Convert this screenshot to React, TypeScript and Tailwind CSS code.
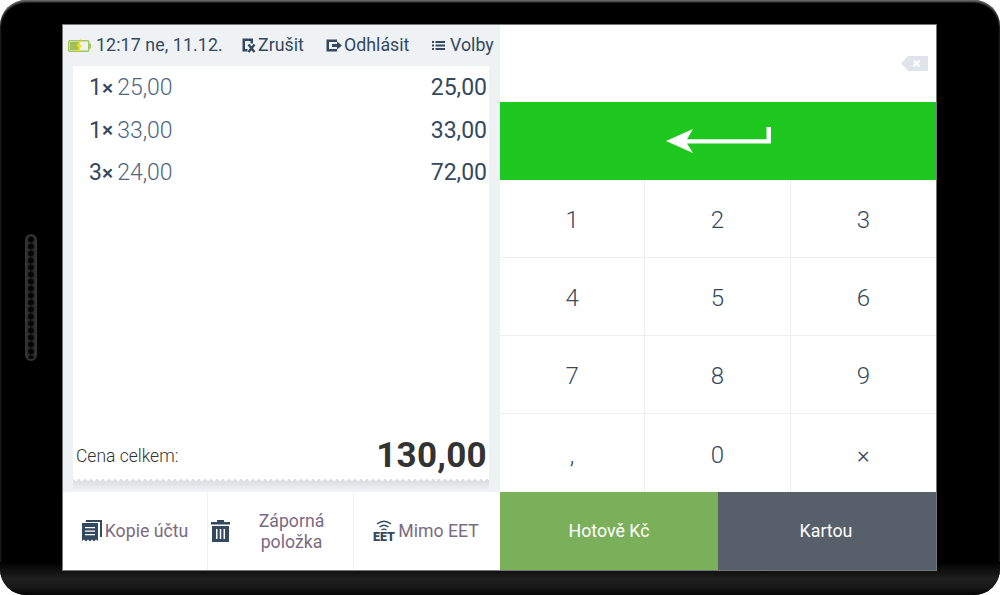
const items = [
  { qty: '1', price: '25,00', total: '25,00' },
  { qty: '1', price: '33,00', total: '33,00' },
  { qty: '3', price: '24,00', total: '72,00' },
];

const keys = ['1', '2', '3', '4', '5', '6', '7', '8', '9', ',', '0', '×'];

function BatteryIcon() {
  return (
    <svg width="23" height="14" viewBox="0 0 23 14" className="shrink-0">
      <rect x="0.75" y="1.75" width="20" height="10.5" rx="1" fill="#eef2f5" stroke="#a5c75f" strokeWidth="1.5" />
      <rect x="2" y="3" width="10" height="8" fill="#a0c058" />
      <rect x="21" y="4.5" width="2" height="5" fill="#a5c75f" />
      <path d="M12.5 0 L8.5 7.5 H10.5 L10 14 L14 6 H11.8 L13 0 Z" fill="#f3e312" />
    </svg>
  );
}

function CancelIcon() {
  return (
    <svg width="14" height="15" viewBox="0 0 14 15" className="shrink-0">
      <path d="M0.5 0.5 H11 V5.5 H8.5 V3 H3 V11 H5.5 V13.5 H0.5 Z" fill="#34495e" />
      <path d="M6.5 6.5 L12.5 14 M12.5 6.5 L6.5 14" stroke="#34495e" strokeWidth="2.4" fill="none" />
    </svg>
  );
}

function LogoutIcon() {
  return (
    <svg width="16" height="13" viewBox="0 0 16 13" className="shrink-0">
      <path d="M0.5 0.5 H11 V3 H3 V10 H11 V12.5 H0.5 Z" fill="#34495e" />
      <path d="M6 5 H11 V2.5 L16 6.5 L11 10.5 V8 H6 Z" fill="#34495e" />
    </svg>
  );
}

function ListIcon() {
  return (
    <svg width="13" height="11" viewBox="0 0 13 11" className="shrink-0">
      <path d="M0 1 H2 V3 H0 Z M0 4.5 H2 V6.5 H0 Z M0 8 H2 V10 H0 Z" fill="#34495e" />
      <path d="M3.5 1 H13 V3 H3.5 Z M3.5 4.5 H13 V6.5 H3.5 Z M3.5 8 H13 V10 H3.5 Z" fill="#34495e" />
    </svg>
  );
}

function ReceiptIcon() {
  return (
    <svg width="20" height="22" viewBox="0 0 20 22" className="shrink-0">
      <path d="M3 1.5 H4 V0 H18.5 H20 V17 H18 V2 H4 Z" fill="#34495e" />
      <path
        d="M0 3 H16 V21 L14 19.5 L12 21.5 L10 19.5 L8 21.5 L6 19.5 L4 21.5 L2 19.5 L0 21 Z"
        fill="#34495e"
      />
      <path d="M3 7 H13 V8.2 H3 Z M3 10.5 H13 V11.7 H3 Z M3 14 H13 V15.2 H3 Z" fill="#fff" />
    </svg>
  );
}

function TrashIcon() {
  return (
    <svg width="19" height="22" viewBox="0 0 19 22" className="shrink-0">
      <path d="M6 0 H13 V2 H19 V4.5 H0 V2 H6 Z" fill="#34495e" />
      <path d="M1 6 H18 V22 H1 Z" fill="#34495e" />
      <path d="M5 9 H6.5 V19 H5 Z M8.75 9 H10.25 V19 H8.75 Z M12.5 9 H14 V19 H12.5 Z" fill="#fff" />
    </svg>
  );
}

function EetIcon() {
  return (
    <svg width="24" height="24" viewBox="0 0 24 24" className="shrink-0">
      <path d="M5 5 Q12 -0.5 19 5" stroke="#34495e" strokeWidth="1.4" fill="none" />
      <path d="M7.5 8 Q12 4.5 16.5 8" stroke="#34495e" strokeWidth="1.4" fill="none" />
      <path d="M9.5 11 Q12 9.2 14.5 11" stroke="#34495e" strokeWidth="1.4" fill="none" />
      <text x="12" y="21.5" textAnchor="middle" fontFamily="Roboto" fontWeight="900" fontSize="12.5" fill="#34495e">
        EET
      </text>
    </svg>
  );
}

function BackspaceIcon() {
  return (
    <svg width="27" height="15" viewBox="0 0 27 15">
      <path d="M7 0 H27 V15 H7 L0 7.5 Z" fill="#dfe4eb" />
      <path d="M12.5 4.5 L18.5 10.5 M18.5 4.5 L12.5 10.5" stroke="#fff" strokeWidth="2.2" />
    </svg>
  );
}

function EnterIcon() {
  return (
    <svg width="106" height="28" viewBox="0 0 106 28">
      <path d="M0 14 L27 2 L21 12.2 H100.5 V0 H105 V16.5 H21 L27 26 Z" fill="#fff" />
    </svg>
  );
}

function TornEdge() {
  return (
    <svg width="416" height="5" className="block">
      <defs>
        <pattern id="torn" width="6" height="5" patternUnits="userSpaceOnUse">
          <path d="M0 0 H6 V0.5 L3 3.5 L0 0.5 Z" fill="#fff" />
        </pattern>
      </defs>
      <rect width="416" height="5" fill="url(#torn)" />
    </svg>
  );
}

export default function App() {
  return (
    <div className="w-[1000px] h-[595px] bg-white overflow-hidden font-['Roboto',sans-serif]">
      <div className="relative w-full h-full rounded-[26px] bg-black shadow-[inset_0_2px_2px_rgba(130,130,130,0.8)] overflow-hidden pt-[25px] pl-[63px]">
        {/* bottom band of the tablet */}
        <div className="absolute inset-x-0 bottom-0 h-[33px] bg-[linear-gradient(180deg,#000_0%,#1f1f1f_50%,#181818_75%,#050505_100%)]" />
        {/* speaker */}
        <div className="absolute left-[25px] top-[234px] w-[12px] h-[127px] rounded-full border-2 border-[#333] bg-[radial-gradient(circle,#050505_45%,#2c2c2c_70%)] bg-[length:8px_7px]" />

        <div className="relative flex w-[873px] h-[545px] outline outline-1 outline-[#777]">
          {/* left side */}
          <div className="flex flex-col w-[437px] bg-white">
            <div className="flex flex-col h-[467px] bg-[#eef2f5]">
              <div className="flex items-center h-[41px] pl-[5px] text-[17.8px] text-[#34495e] whitespace-nowrap">
                <BatteryIcon />
                <span className="ml-[5px] w-[146px] tracking-[0.1px]">12:17 ne, 11.12.</span>
                <span className="flex items-center gap-[2px] w-[84px]">
                  <CancelIcon />
                  Zrušit
                </span>
                <span className="flex items-center gap-[2px] w-[106px]">
                  <LogoutIcon />
                  Odhlásit
                </span>
                <span className="flex items-center gap-[5px]">
                  <ListIcon />
                  Volby
                </span>
              </div>
              <div className="flex flex-col w-[416px] ml-[10px] h-[412px] bg-white">
                <div className="flex flex-col flex-1 pt-[1.5px] pl-[16px] pr-[2px]">
                  {items.map((item) => (
                    <div key={item.total + item.qty} className="flex items-center justify-between h-[42.25px] text-[23px] text-[#34495e]">
                      <span className="flex items-center">
                        <span>{item.qty}</span>
                        <span className="text-[21px] font-medium mr-[4px] leading-none">×</span>
                        <span className="font-light text-[#4f6580]">{item.price}</span>
                      </span>
                      <span>{item.total}</span>
                    </div>
                  ))}
                </div>
                <div className="flex items-end justify-between h-[42px] pl-[3px] pr-[2px]">
                  <span className="text-[17.5px] font-light text-[#333] mb-[9px]">Cena celkem:</span>
                  <span className="text-[35px] font-bold text-[#333] leading-[42px] tracking-[0.3px] mb-[1px]">130,00</span>
                </div>
              </div>
              <div className="w-[416px] ml-[10px] h-[14px] bg-[linear-gradient(180deg,#d4d8da,#f3f5f6)]">
                <TornEdge />
              </div>
            </div>
            <div className="flex flex-1 text-[17.7px] text-[#7b6a80]">
              <div className="flex items-center justify-center gap-[3px] w-[145px] border-r border-[#f0f0f0]">
                <ReceiptIcon />
                Kopie účtu
              </div>
              <div className="flex items-center w-[146px] pl-[3px] border-r border-[#f0f0f0]">
                <TrashIcon />
                <span className="flex-1 text-center leading-[21px] pt-[1px]">
                  Záporná
                  <br />
                  položka
                </span>
              </div>
              <div className="flex items-center justify-center gap-[2px] flex-1 pr-[3px]">
                <EetIcon />
                Mimo EET
              </div>
            </div>
          </div>

          {/* right side */}
          <div className="flex flex-col w-[436px] bg-white">
            <div className="flex items-center justify-end h-[77px] pr-[8px] pb-[1px]">
              <BackspaceIcon />
            </div>
            <div className="flex items-center justify-center h-[78px] pl-[2px] bg-[#1fc81f]">
              <EnterIcon />
            </div>
            <div className="grid grid-cols-3 grid-rows-4 h-[312px]">
              {keys.map((key, i) => (
                <div
                  key={key}
                  className={`flex items-center justify-center pt-[3px] text-[24px] font-light text-[#34495e] border-[#eeeeee] ${i % 3 !== 2 ? 'border-r' : ''} ${i < 9 ? 'border-b' : ''}`}
                >
                  {key}
                </div>
              ))}
            </div>
            <div className="flex flex-1 text-[17.8px] text-white">
              <div className="flex items-center justify-center w-[218px] pt-[1px] bg-[#7bb05a]">Hotově Kč</div>
              <div className="flex items-center justify-center flex-1 pt-[1px] pr-[2px] bg-[#575f6b]">Kartou</div>
            </div>
          </div>
        </div>
      </div>
    </div>
  );
}
